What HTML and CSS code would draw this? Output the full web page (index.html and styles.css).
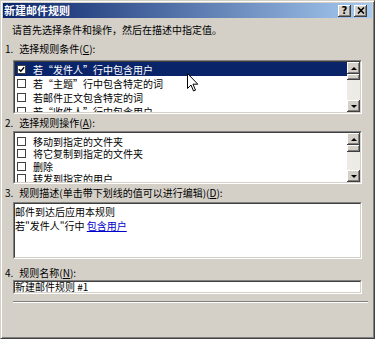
FILE: index.html
```html
<!DOCTYPE html>
<html lang="zh-CN">
<head>
  <meta charset="UTF-8">
  <title>新建邮件规则</title>
  <link rel="stylesheet" href="styles.css">
</head>
<body>

<div class="dialog">
  <div class="titlebar">
    <span class="title">新建邮件规则</span>
    <div class="tb-buttons">
      <span class="tb-btn help">?</span>
      <span class="tb-btn"><svg width="8" height="7" viewBox="0 0 8 7"><path d="M1 0.5 L7 6.5 M7 0.5 L1 6.5" stroke="#000" stroke-width="1.6"/></svg></span>
    </div>
  </div>

  <div class="content">
    <p class="intro">请首先选择条件和操作，然后在描述中指定值。</p>

    <!-- 1. conditions -->
    <div class="label label-cond"><span class="num">1.</span>选择规则条件(<u>C</u>):</div>
    <div class="listbox list-cond">
      <div class="well">
        <div class="rows">
          <div class="row selected"><span class="chk"><svg width="7" height="7" viewBox="0 0 7 7"><path d="M0.8 3.2 L2.8 5.2 L6.2 1.2" fill="none" stroke="#000" stroke-width="1.4"/></svg></span>若“发件人”行中包含用户</div>
          <div class="row"><span class="chk"></span>若“主题”行中包含特定的词</div>
          <div class="row"><span class="chk"></span>若邮件正文包含特定的词</div>
          <div class="row"><span class="chk"></span>若“收件人”行中包含用户</div>
        </div>
        <div class="scrollbar">
          <span class="sb-btn up"></span>
          <span class="sb-thumb"></span>
          <span class="sb-track"></span>
          <span class="sb-btn down"></span>
        </div>
      </div>
    </div>

    <!-- 2. actions -->
    <div class="label label-act"><span class="num">2.</span>选择规则操作(<u>A</u>):</div>
    <div class="listbox list-act">
      <div class="well">
        <div class="rows">
          <div class="row"><span class="chk"></span>移动到指定的文件夹</div>
          <div class="row"><span class="chk"></span>将它复制到指定的文件夹</div>
          <div class="row"><span class="chk"></span>删除</div>
          <div class="row"><span class="chk"></span>转发到指定的用户</div>
        </div>
        <div class="scrollbar">
          <span class="sb-btn up"></span>
          <span class="sb-thumb"></span>
          <span class="sb-track"></span>
          <span class="sb-btn down"></span>
        </div>
      </div>
    </div>

    <!-- 3. description -->
    <div class="label label-desc"><span class="num">3.</span>规则描述(单击带下划线的值可以进行编辑)(<u>D</u>):</div>
    <div class="listbox desc">
      <div class="well desc-text">
        <div>邮件到达后应用本规则</div>
        <div>若"发件人"行中 <a href="#" class="value">包含用户</a></div>
      </div>
    </div>

    <!-- 4. name -->
    <div class="label label-name"><span class="num">4.</span>规则名称(<u>N</u>):</div>
    <div class="listbox name-box">
      <div class="well name-text">新建邮件规则 #1</div>
    </div>

    <div class="separator"></div>
  </div>

  <svg class="cursor" width="12" height="19" viewBox="0 0 12 19"><path d="M0.5 0.5 L0.5 15.5 L4 12 L6.5 18 L8.5 17.2 L6 11.2 L10.8 11.2 Z" fill="#fff" stroke="#000" stroke-width="1"/></svg>
</div>

</body>
</html>
```

FILE: styles.css
```css
* {
  box-sizing: border-box;
}

body {
  margin: 0;
  background: #fff;
  font-family: "Noto Sans CJK SC", "Noto Sans", sans-serif;
  font-size: 10px;
  color: #000;
}

.dialog {
  position: relative;
  width: 375px;
  height: 339px;
  background: #d4d0c8;
  border: 1px solid;
  border-color: #d4d0c8 #404040 #404040 #d4d0c8;
  box-shadow: inset 1px 1px 0 #fff, inset -1px -1px 0 #808080;
  padding: 2px;
  display: flex;
  flex-direction: column;
}

/* title bar */
.titlebar {
  flex: none;
  height: 15px;
  background: linear-gradient(to right, #0a246a, #a6caf0);
  display: flex;
  align-items: center;
  justify-content: space-between;
  padding: 0 5px 0 1px;
}

.title {
  color: #fff;
  font-weight: bold;
  font-size: 11px;
  line-height: 15px;
}

.tb-buttons {
  display: flex;
  gap: 3px;
}

.tb-btn {
  width: 13px;
  height: 12px;
  background: #d4d0c8;
  box-shadow: inset -1px -1px 0 #404040, inset 1px 1px 0 #fff, inset -2px -2px 0 #808080;
  display: flex;
  align-items: center;
  justify-content: center;
}

.tb-btn.help {
  font: bold 10px "DejaVu Sans", sans-serif;
  line-height: 12px;
}

/* body */
.content {
  flex: 1;
  display: flex;
  flex-direction: column;
  padding-left: 2px;
}

.intro {
  margin: 6px 0 0 7px;
  line-height: 12px;
}

.label {
  line-height: 12px;
}

.num {
  margin-right: 6px;
}

.label-cond { margin-top: 7px; }
.label-act { margin-top: 3px; }
.label-desc { margin-top: 3px; }
.label-name { margin-top: 8px; }

.listbox {
  flex: none;
  margin-left: 8px;
  width: 349px;
  border: 1px solid;
  border-color: #808080 #fff #fff #808080;
}

.well {
  height: 100%;
  background: #fff;
  border: 1px solid;
  border-color: #404040 #d4d0c8 #d4d0c8 #404040;
  display: flex;
  overflow: hidden;
}

.list-cond {
  margin-top: 5px;
  height: 54px;
}

.list-act {
  margin-top: 2px;
  height: 53px;
}

.rows {
  flex: 1;
  overflow: hidden;
}

.row {
  height: 14px;
  display: flex;
  align-items: center;
  white-space: nowrap;
}

.list-act .rows {
  padding-top: 2px;
}

.list-act .row {
  height: 12.5px;
}

.row.selected {
  background: #0a246a;
  color: #fff;
}

.chk {
  flex: none;
  width: 9px;
  height: 9px;
  margin: 0 7px 0 2px;
  background: #fff;
  border: 1px solid #404040;
  display: flex;
  align-items: center;
  justify-content: center;
}

/* scrollbars */
.scrollbar {
  flex: none;
  width: 13px;
  display: flex;
  flex-direction: column;
  background: #edebe6;
}

.sb-btn, .sb-thumb {
  flex: none;
  background: #d4d0c8;
  box-shadow: inset -1px -1px 0 #404040, inset 1px 1px 0 #fff, inset -2px -2px 0 #808080;
}

.sb-btn {
  height: 12px;
  display: flex;
  align-items: center;
  justify-content: center;
}

.sb-btn::after {
  content: "";
  border-left: 3px solid transparent;
  border-right: 3px solid transparent;
}

.sb-btn.up::after { border-bottom: 3px solid #000; }
.sb-btn.down::after { border-top: 3px solid #000; }

.sb-thumb { height: 6px; }
.list-act .sb-thumb { height: 7px; }

.sb-track { flex: 1; }

/* description */
.desc {
  margin-top: 3px;
  height: 57px;
}

.desc-text {
  display: block;
  padding-top: 1px;
  line-height: 14px;
}

.value {
  color: #0000cc;
  text-decoration: underline;
}

/* name */
.name-box {
  margin-top: 1px;
  height: 14px;
}

.name-text {
  display: flex;
  align-items: center;
  line-height: 10px;
  white-space: nowrap;
}

.separator {
  margin: 7px 4px 0 8px;
  height: 2px;
  border-top: 1px solid #808080;
  border-bottom: 1px solid #fff;
}

.cursor {
  position: absolute;
  left: 186px;
  top: 72px;
}
```
